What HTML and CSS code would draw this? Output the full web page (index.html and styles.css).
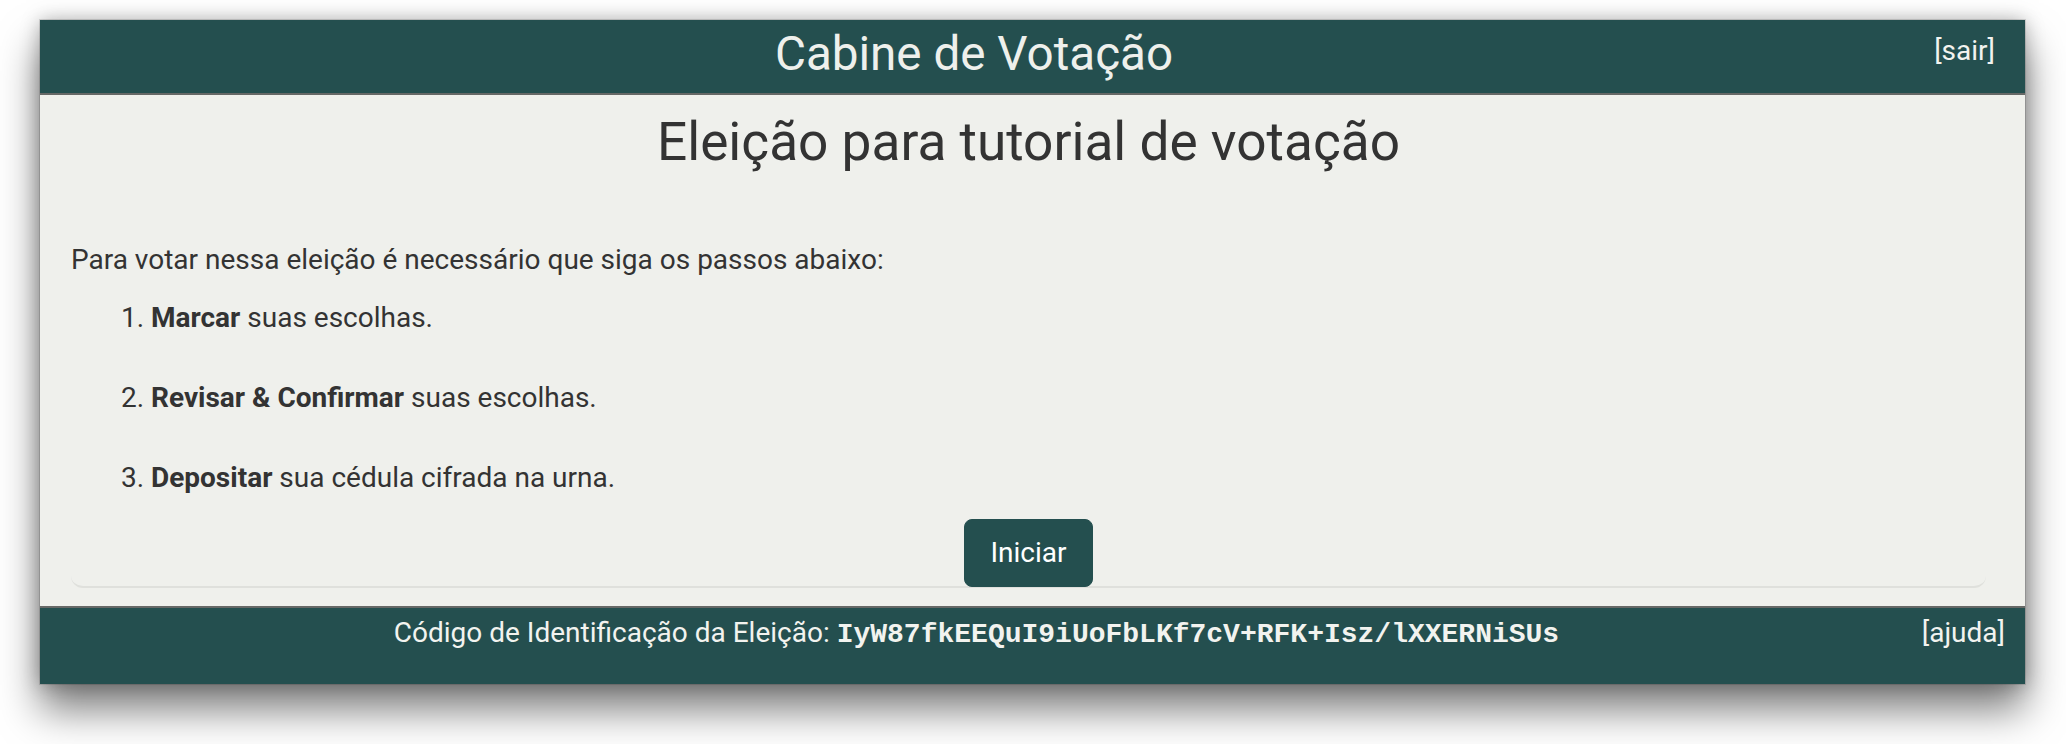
FILE: index.html
```html
<!DOCTYPE html>
<html lang="pt-BR">
<head>
<meta charset="utf-8">
<title>Cabine de Votação</title>
<link rel="stylesheet" href="styles.css">
</head>
<body>
<div class="window">
  <header class="topbar">
    <div class="topbar-title">Cabine de Votação</div>
    <div class="topbar-link"><a href="#">[sair]</a></div>
  </header>
  <main class="content">
    <h1 class="election-title">Eleição para tutorial de votação</h1>
    <section class="card">
      <p class="intro">Para votar nessa eleição é necessário que siga os passos abaixo:</p>
      <ol class="steps">
        <li><strong>Marcar</strong> suas escolhas.</li>
        <li><strong>Revisar &amp; Confirmar</strong> suas escolhas.</li>
        <li><strong>Depositar</strong> sua cédula cifrada na urna.</li>
      </ol>
      <div class="actions">
        <button class="btn-start" type="button">Iniciar</button>
      </div>
    </section>
  </main>
  <footer class="bottombar">
    <div class="bottombar-text">Código de Identificação da Eleição: <span class="hash">IyW87fkEEQuI9iUoFbLKf7cV+RFK+Isz/lXXERNiSUs</span></div>
    <div class="bottombar-link"><a href="#">[ajuda]</a></div>
  </footer>
</div>
</body>
</html>
```

FILE: styles.css
```css
html, body {
  margin: 0;
  padding: 0;
  background: #ffffff;
}

body {
  font-family: Roboto, "Liberation Sans", Arial, sans-serif;
  color: #333333;
  padding: 20px 41px 60px 40px;
}

.window {
  display: flex;
  flex-direction: column;
  height: 664px;
  background: #eff0ec;
  box-shadow: 0 26px 38px rgba(0, 0, 0, 0.5), 0 0 18px rgba(0, 0, 0, 0.28), 0 0 0 1px rgba(0, 0, 0, 0.12);
}

.topbar {
  display: grid;
  grid-template-columns: 1fr 117px;
  height: 73px;
  background: #244f4f;
  border-bottom: 2px solid #666866;
  color: #eef0ec;
}

.topbar-title {
  font-size: 47.6px;
  line-height: 68px;
  text-align: center;
}

.topbar-link,
.bottombar-link {
  font-size: 28px;
  line-height: 42px;
  text-align: right;
}

.topbar-link {
  padding: 10px 30px 0 0;
}

.topbar-link a,
.bottombar-link a {
  color: #f2f3ef;
  text-decoration: none;
}

.content {
  flex: 1;
  padding-top: 15px;
}

.election-title {
  margin: 0 39px 0 31px;
  font-size: 53.2px;
  font-weight: 400;
  line-height: 64px;
  text-align: center;
  color: #333333;
}

.card {
  margin: 65px 39px 0 31px;
  border-bottom: 2px solid #dfe0dc;
  border-radius: 0 0 12px 12px;
}

.intro {
  margin: 0 0 16px;
  font-size: 28px;
  line-height: 42px;
}

.steps {
  margin: 0;
  padding-left: 80px;
  font-size: 28px;
  line-height: 42px;
}

.steps li {
  margin-bottom: 38px;
}

.steps li:last-child {
  margin-bottom: 0;
}

.steps strong {
  font-weight: 700;
}

.actions {
  display: flex;
  justify-content: center;
  padding-top: 20px;
}

.btn-start {
  font-family: Roboto, "Liberation Sans", Arial, sans-serif;
  font-size: 28px;
  line-height: 42px;
  padding: 12px 25px;
  border: 1px solid #244f4f;
  border-radius: 8px;
  background: #244f4f;
  color: #ffffff;
  margin-bottom: -1px;
}

.bottombar {
  display: grid;
  grid-template-columns: 1fr 112px;
  height: 76px;
  background: #244f4f;
  border-top: 2px solid #666866;
  color: #f2f3ef;
}

.bottombar-text {
  font-size: 28px;
  line-height: 42px;
  padding-top: 4px;
  text-align: center;
}

.bottombar-link {
  padding: 4px 20px 0 0;
}

.hash {
  font-family: "Liberation Mono", "Courier New", monospace;
  font-weight: 700;
}
```
